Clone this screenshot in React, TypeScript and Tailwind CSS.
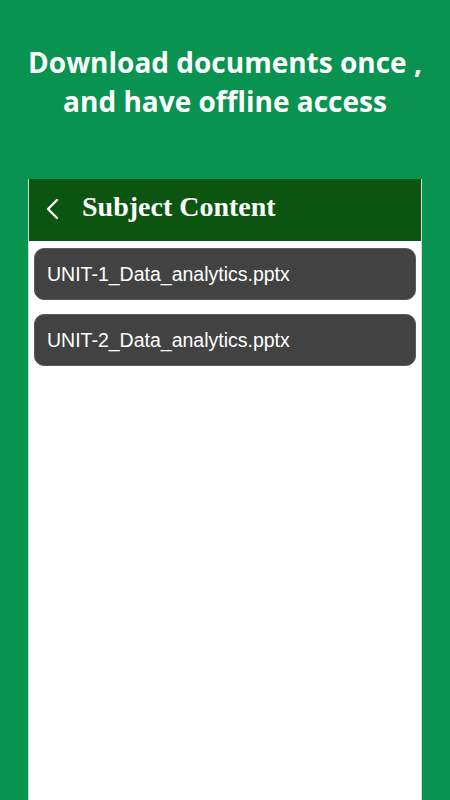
const files = ["UNIT-1_Data_analytics.pptx", "UNIT-2_Data_analytics.pptx"];

export default function App() {
    return (
        <div className="h-[800px] w-[450px] overflow-hidden bg-[#099351] flex flex-col">
            {/* HEADLINE */}
            <h1
                className="pt-[43px] text-center text-white font-bold text-[28px] leading-[39px]"
                style={{ fontFamily: '"Open Sans", sans-serif' }}
            >
                Download documents once ,<br />
                and have offline access
            </h1>

            {/* PHONE FRAME */}
            <div className="mt-[58px] mx-[28px] flex-1 bg-white border-l border-r border-[#d9d9d9] flex flex-col">
                <div className="h-[62px] bg-[#0b5510] flex items-center pl-[16px] gap-[23px] pb-[6px]">
                    <svg width="14" height="22" viewBox="0 0 14 22" fill="none" className="mt-[4px]">
                        <path d="M12 2 L3 11 L12 20" stroke="white" strokeWidth="2.4" strokeLinecap="round" strokeLinejoin="round" />
                    </svg>
                    <span
                        className="text-white font-bold text-[28px] leading-none"
                        style={{ fontFamily: '"Liberation Serif", "DejaVu Serif", serif' }}
                    >
                        Subject Content
                    </span>
                </div>

                <div className="flex flex-col gap-[14px] px-[5px] pt-[7px]">
                    {files.map((f) => (
                        <div
                            key={f}
                            className="h-[52px] rounded-[10px] bg-[#424242] border border-[#5a5a5a] flex items-center px-[12px] pt-[2px] text-white text-[19.5px]"
                            style={{ fontFamily: '"Liberation Sans", Arial, sans-serif' }}
                        >
                            {f}
                        </div>
                    ))}
                </div>
            </div>
        </div>
    );
}
